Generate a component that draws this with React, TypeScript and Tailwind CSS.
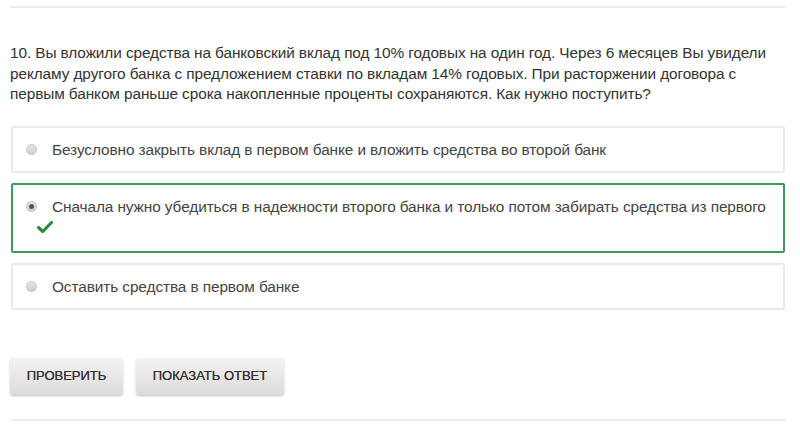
import { useState } from 'react'

const options = [
  'Безусловно закрыть вклад в первом банке и вложить средства во второй банк',
  'Сначала нужно убедиться в надежности второго банка и только потом забирать средства из первого',
  'Оставить средства в первом банке',
]

function Radio({ checked }: { checked: boolean }) {
  return (
    <span className="flex h-[11px] w-[11px] shrink-0 items-center justify-center rounded-full border border-[#c4c4c4] bg-gradient-to-b from-[#e6e6e6] to-[#cfcfcf]">
      {checked && <span className="h-[5px] w-[5px] rounded-full bg-[#555]" />}
    </span>
  )
}

export default function App() {
  const [selected, setSelected] = useState(1)

  return (
    <div className="min-h-[427px] bg-white px-[10px] pt-[6px] font-['Liberation_Sans',Arial,sans-serif] text-[#333]">
      <div className="w-[775px]">
        <div className="h-[2px] bg-[#ececec]" />

        <p className="mt-[35px] text-[15.4px] leading-[20.5px] tracking-[-0.1px] text-[#333]">
          10. Вы вложили средства на банковский вклад под 10% годовых на один год. Через 6 месяцев Вы увидели
          рекламу другого банка с предложением ставки по вкладам 14% годовых. При расторжении договора с
          первым банком раньше срока накопленные проценты сохраняются. Как нужно поступить?
        </p>

        <div className="mt-[21px] flex flex-col gap-[10px]">
          {options.map((text, i) => {
            const correct = i === 1
            return (
              <div
                key={i}
                onClick={() => setSelected(i)}
                className={
                  correct
                    ? 'ml-px cursor-pointer rounded-[2px] border-2 border-[#3d9a5c] px-[13px] pb-[18px] pt-[12px]'
                    : 'ml-px cursor-pointer rounded-[2px] border-2 border-[#eaeaea] px-[13px] py-[12px]'
                }
              >
                <div className="flex items-center gap-[15px]">
                  <Radio checked={selected === i} />
                  <span className="text-[15.4px] leading-[19px] tracking-[-0.1px] text-[#444]">{text}</span>
                </div>
                {correct && (
                  <svg className="ml-[11px] mt-[5px]" width="16" height="12" viewBox="0 0 16 12">
                    <path d="M1.5 6.5 L5.8 10.5 L14.5 1.5" fill="none" stroke="#2f8a3f" strokeWidth="3.2" strokeLinecap="round" strokeLinejoin="round" />
                  </svg>
                )}
              </div>
            )
          })}
        </div>

        <div className="mt-[48px] flex gap-[13px]">
          <button className="h-[37px] w-[113px] rounded-[3px] bg-gradient-to-b from-[#f4f2f2] to-[#dedada] text-[13px] text-[#333] shadow-[0_1px_2px_rgba(0,0,0,0.25)] [text-shadow:0_0_0.5px_#333]">
            ПРОВЕРИТЬ
          </button>
          <button className="h-[37px] w-[148px] rounded-[3px] bg-gradient-to-b from-[#f4f2f2] to-[#dedada] text-[13px] text-[#333] shadow-[0_1px_2px_rgba(0,0,0,0.25)] [text-shadow:0_0_0.5px_#333]">
            ПОКАЗАТЬ ОТВЕТ
          </button>
        </div>

        <div className="mt-[24px] h-[2px] bg-[#ececec]" />
      </div>
    </div>
  )
}
